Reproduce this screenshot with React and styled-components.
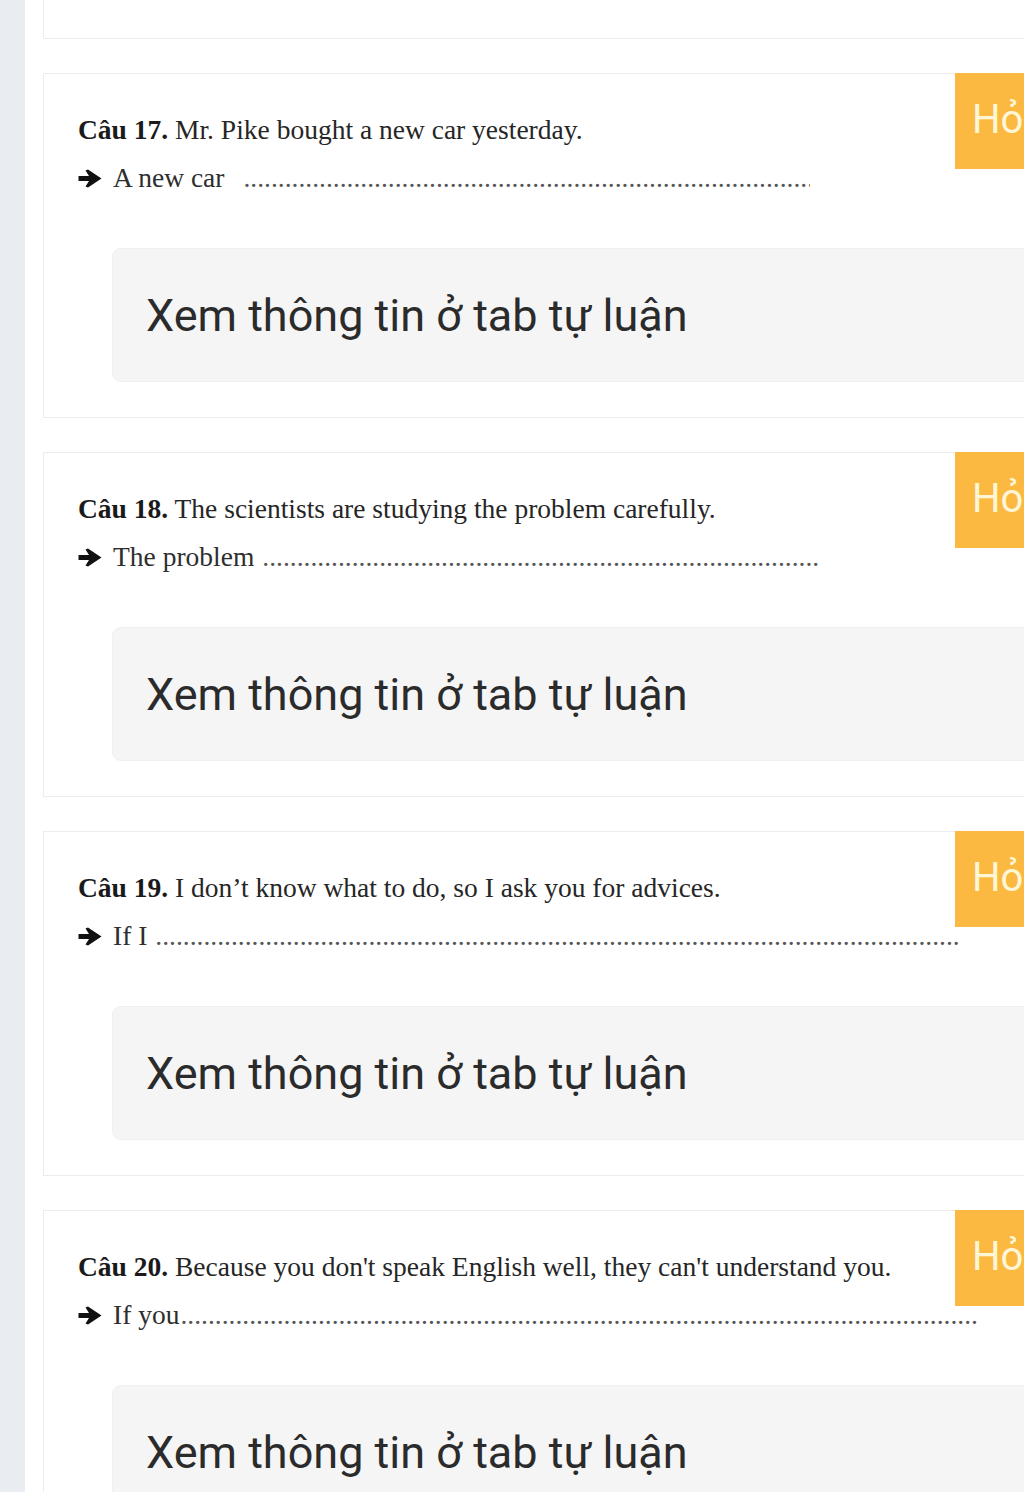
import React from "react";
import styled, { createGlobalStyle } from "styled-components";

const Global = createGlobalStyle`
  html, body { margin: 0; padding: 0; background: #ffffff; overflow: hidden; }
  body { font-family: "Liberation Serif", "Times New Roman", serif; }
`;

const Page = styled.div`
  display: flex;
  width: 1024px;
  height: 1492px;
  overflow: hidden;
`;

const SideStrip = styled.div`
  flex: 0 0 25px;
  background: #e9edf2;
`;

const Main = styled.div`
  flex: 1;
  display: flex;
  flex-direction: column;
  gap: 34px;
  padding-left: 18px;
  min-width: 0;
`;

const Card = styled.section`
  position: relative;
  box-sizing: border-box;
  width: 1100px;
  flex: 0 0 auto;
  border: 1px solid #ececec;
  border-top: ${(p) => (p.$partial ? "none" : "1px solid #ececec")};
  height: ${(p) => (p.$partial ? "37px" : "345px")};
  padding: 38px 0 0 34px;
  background: #fff;
`;

const AskButton = styled.div`
  position: absolute;
  top: -1px;
  left: 911px;
  width: 160px;
  height: 96px;
  background: #fbb941;
  color: #fff6d6;
  font-family: Roboto, "Noto Sans", sans-serif;
  font-size: 40px;
  line-height: 94px;
  padding-left: 17px;
  box-sizing: border-box;
  white-space: nowrap;
`;

const Question = styled.div`
  font-family: "Liberation Serif", "Times New Roman", serif;
  font-size: 27.5px;
  line-height: 36px;
  color: #262626;
  white-space: nowrap;
  b { font-weight: bold; color: #1a1a1a; }
`;

const AnswerLine = styled.div`
  display: flex;
  align-items: center;
  margin-top: 12px;
  height: 36px;
  font-family: "Liberation Serif", "Times New Roman", serif;
  font-size: 27.5px;
  color: #2e2e2e;
  white-space: nowrap;
`;

const Arrow = styled.svg`
  width: 24px;
  height: 19px;
  margin-right: 11px;
  flex: 0 0 auto;
`;

const Lead = styled.span`
  margin-right: ${(p) => p.$gap}px;
`;

const Dots = styled.span`
  display: inline-block;
  width: ${(p) => p.$w}px;
  overflow: hidden;
  white-space: nowrap;
  color: #555;
`;

const InfoBox = styled.div`
  margin: 52px 0 0 34px;
  height: 134px;
  background: #f5f5f6;
  border: 1px solid #f0f0f0;
  border-radius: 9px;
  box-sizing: border-box;
  display: flex;
  align-items: center;
  padding-left: 33px;
  font-family: Roboto, "Noto Sans", sans-serif;
  font-size: 45px;
  color: #2b2b2b;
`;

const ArrowIcon = () => (
  <Arrow viewBox="0 0 24 19">
    <path d="M0.5 7 H11 L7.5 1.5 L10 0.5 L23.5 9.5 L10 18.5 L7.5 17.5 L11 12 H0.5 Z" fill="#111" />
  </Arrow>
);

const questions = [
  { n: 17, q: "Mr. Pike bought a new car yesterday.", lead: "A new car", gap: 19, dots: 567 },
  { n: 18, q: "The scientists are studying the problem carefully.", lead: "The problem", gap: 8, dots: 558 },
  { n: 19, q: "I don’t know what to do, so I ask you for advices.", lead: "If I", gap: 8, dots: 803 },
  { n: 20, q: "Because you don't speak English well, they can't understand you.", lead: "If you", gap: 1, dots: 798 },
];

const dotString = ".".repeat(300);

export default function App() {
  return (
    <>
      <Global />
      <Page>
        <SideStrip />
        <Main>
          <Card $partial />
          {questions.map((it) => (
            <Card key={it.n}>
              <Question>
                <b>Câu {it.n}.</b> {it.q}
              </Question>
              <AnswerLine>
                <ArrowIcon />
                <Lead $gap={it.gap}>{it.lead}</Lead>
                <Dots $w={it.dots}>{dotString}</Dots>
              </AnswerLine>
              <InfoBox>Xem thông tin ở tab tự luận</InfoBox>
              <AskButton>Hỏi đáp</AskButton>
            </Card>
          ))}
        </Main>
      </Page>
    </>
  );
}
